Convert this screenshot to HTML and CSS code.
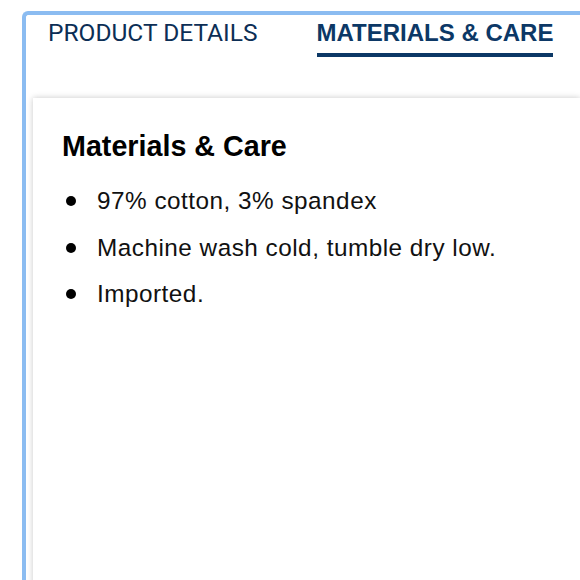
FILE: index.html
```html
<!DOCTYPE html>
<html lang="en">
<head>
<meta charset="utf-8">
<title>Materials &amp; Care</title>
<link rel="stylesheet" href="styles.css">
</head>
<body>
<div class="frame">
  <div class="tabs">
    <div class="tab">PRODUCT DETAILS</div>
    <div class="tab active">MATERIALS &amp; CARE</div>
  </div>
  <div class="card">
    <h2 class="title">Materials &amp; Care</h2>
    <ul class="list">
      <li>97% cotton, 3% spandex</li>
      <li>Machine wash cold, tumble dry low.</li>
      <li>Imported.</li>
    </ul>
  </div>
</div>
</body>
</html>
```
FILE: styles.css
```css
html, body {
  margin: 0;
  padding: 0;
  background: #ffffff;
  overflow: hidden;
}
body {
  font-family: "Liberation Sans", Arial, sans-serif;
  width: 580px;
  height: 580px;
}
.frame {
  margin: 11px 0 0 22px;
  border-top: 4px solid #8bbcf1;
  border-left: 4px solid #8bbcf1;
  border-top-left-radius: 6px;
  height: 569px;
  box-sizing: border-box;
  overflow: hidden;
}
.tabs {
  display: flex;
  align-items: flex-start;
  gap: 59px;
  padding-left: 22px;
  height: 83px;
}
.tab {
  font-family: Roboto, "Liberation Sans", sans-serif;
  font-size: 24.5px;
  line-height: 28px;
  color: #0c2e55;
  padding-top: 4px;
  height: 34px;
  white-space: nowrap;
}
.tab.active {
  font-family: "Liberation Sans", Arial, sans-serif;
  font-size: 24px;
  font-weight: 700;
  color: #0c3866;
  border-bottom: 4px solid #0c3866;
}
.card {
  margin-left: 7px;
  background: #fff;
  box-shadow: 0 0 6px rgba(0, 0, 0, 0.22);
  height: 500px;
  padding: 30px 0 0 29px;
  box-sizing: border-box;
}
.title {
  margin: 0;
  font-size: 28.7px;
  line-height: 36px;
  font-weight: 700;
  color: #000;
}
.list {
  list-style: none;
  margin: 14px 0 0;
  padding: 0 0 0 4px;
  font-size: 24.3px;
  letter-spacing: 0.5px;
  line-height: 46.5px;
  color: #111;
}
.list li {
  display: flex;
  align-items: center;
  gap: 21px;
}
.list li::before {
  content: "";
  flex: none;
  width: 10px;
  height: 10px;
  border-radius: 50%;
  background: #000;
}
```
